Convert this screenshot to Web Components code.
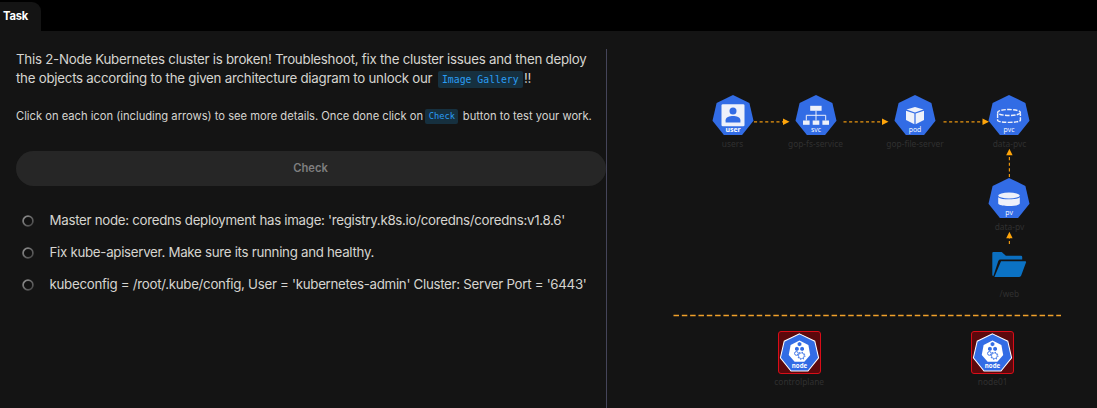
<!DOCTYPE html>
<html lang="en">
<head>
<meta charset="utf-8">
<title>Task</title>
<style>
html,body{margin:0;height:100%;background:#141414;overflow:hidden}
body{font-family:Inter,"Liberation Sans",sans-serif;color:#d6d4d0}
</style>
</head>
<body>
<lab-page></lab-page>
<script>
function define(name, html, setup) {
  const t = document.createElement('template');
  t.innerHTML = html;
  customElements.define(name, class extends HTMLElement {
    constructor() {
      super();
      this.attachShadow({mode: 'open'}).append(t.content.cloneNode(true));
    }
    connectedCallback() { if (setup) setup(this, this.shadowRoot); }
  });
}

define('tab-bar', `
<style>
:host{display:flex;align-items:flex-end;height:31px;background:#000}
.tab{box-sizing:border-box;width:41px;height:29px;padding:5px 0 0 3px;background:#141414;border-radius:0 9px 0 0;color:#fff;font-size:11.2px;font-weight:700;letter-spacing:-.2px;line-height:18px;white-space:nowrap}
</style>
<div class="tab"><slot></slot></div>`);

define('code-chip', `
<style>
:host{display:inline-block;box-sizing:border-box;height:17px;padding:0 4.4px;border-radius:2px;background:#16303f;color:#2a9df4;font:9.8px/17px "DejaVu Sans Mono",monospace;letter-spacing:0;vertical-align:0;white-space:nowrap;margin:0 1px 0 1.7px}
:host([small]){height:15px;line-height:15px;font-size:8.7px;padding:0 3.4px;margin:0 1.3px 0 -.7px;vertical-align:1px}
span{display:inline-block}
</style><span><slot></slot></span>`);

define('check-button', `
<style>
:host{display:block}
button{display:block;width:100%;height:35px;border:0;padding:0 1px 0 0;border-radius:18px;background:#262626;color:#7f7f7f;font:600 11.2px/35px Inter,sans-serif;letter-spacing:0}
</style><button type="button"><slot></slot></button>`);

define('task-item', `
<style>
:host{display:flex;align-items:center;height:32px;padding-left:6px;font-size:13.3px;letter-spacing:-.29px;white-space:nowrap}
svg{flex:none;width:12px;height:12px;margin:2px 15.5px 0 0}
</style>
<svg viewBox="0 0 12 12"><defs><linearGradient id="g" x1="0" y1="0" x2="1" y2="1"><stop offset="0" stop-color="#929292"/><stop offset="1" stop-color="#444"/></linearGradient></defs><circle cx="6" cy="6" r="4.9" fill="#111" stroke="url(#g)" stroke-width="1.7"/></svg>
<span><slot></slot></span>`);

const HEPT = '0,-21 16.4,-13.1 20.5,4.7 9.1,18.9 -9.1,18.9 -20.5,4.7 -16.4,-13.1';
const ART = {
  user: `<rect x="-11.5" y="-11.7" width="23" height="22" rx="1.3" fill="#eef1fa"/><circle cy="-5" r="3.5" fill="#326ce5"/><path d="M-7.4 6.4V4.2C-7.4 1.2-3.5 0 0 0s7.4 1.2 7.4 4.2v2.2z" fill="#326ce5"/>`,
  svc: `<g fill="#eef1fa"><rect x="-5.8" y="-10.2" width="11.4" height="5"/><rect x="-13" y="4.5" width="6.6" height="4.3"/><rect x="-3.3" y="4.5" width="6.6" height="4.3"/><rect x="6.4" y="4.5" width="6.6" height="4.3"/></g><path d="M0-5.2V4.5M-9.7 4.5V-.7H9.7V4.5" fill="none" stroke="#eef1fa" stroke-width="1"/>`,
  pod: `<g fill="#eef1fa"><path d="M0-9.1 8.5-6.4 0-3.6-8.5-6.4z"/><path d="M-9-5.3-.6-2.6V8.2L-9 4.1z"/><path d="M9-5.3.6-2.6V8.2L9 4.1z"/></g>`,
  pvc: `<g fill="none" stroke="#eef1fa" stroke-width="1.4" stroke-dasharray="4.5 1.3"><ellipse cy="-3.5" rx="11.4" ry="3"/><path d="M-11.4-2.5V4.2C-11.4 7.1 11.4 7.1 11.4 4.2V-2.5"/></g>`,
  pv: `<g fill="#eef1fa"><ellipse cy="-3.5" rx="10.8" ry="3"/><path d="M-10.8-1.8C-9-.1-5 .2 0 .2S9-.1 10.8-1.8V4.3C10.8 8 -10.8 8-10.8 4.3z"/></g>`,
  node: `<polygon points="0,-12.8 9.5,-8 11.5,2.7 5.2,10 -5.2,10 -11.5,2.7 -9.5,-8" fill="#fff"/><g fill="#326ce5"><path d="M0-11.3 2-10.2v2.4L0-6.7-2-7.8v-2.4z"/><path d="M-2.8-6.3-.8-5.2v2.4l-2 1.1-2-1.1v-2.4z"/><path d="M2.8-6.3 4.8-5.2v2.4l-2 1.1-2-1.1v-2.4z"/></g><g fill="none" stroke="#326ce5"><circle cx="-3.3" cy="1" r="2" stroke-width="1"/><circle cx="2" cy="3.5" r="3.1" stroke-width=".8"/><circle cx="2" cy="3.5" r="3.8" stroke-width="1.1" stroke-dasharray="1.1 1.9"/></g>`
};

define('kube-node', `
<style>
:host{position:absolute;display:flex;flex-direction:column;align-items:center;width:100px;margin-left:-50px}
svg{width:44px;height:44px;overflow:visible;border-radius:3px;box-sizing:border-box}
:host([alert]) svg{background:#5c080c;border:1.4px solid #d90d18;width:43px;height:43px}
text{font-family:"Open Sans",sans-serif;fill:#fff;text-anchor:middle}
.label{font-family:"Noto Sans",sans-serif;font-size:8.4px;line-height:12px;margin-top:-.5px;color:#303030;white-space:nowrap}
:host([alert]) .label{margin-top:1.5px}
</style>
<svg viewBox="-22 -22 44 44"></svg>
<div class="label"><slot></slot></div>`, (el, root) => {
  const kind = el.getAttribute('kind'), svg = root.querySelector('svg');
  el.style.left = el.getAttribute('x') + 'px';
  el.style.top = el.getAttribute('y') + 'px';
  if (kind === 'folder') {
    svg.innerHTML = `<g transform="translate(0 2.6)"><path d="M-16.7-15.5q0-1 1-1h8.4l4.2 3.7H12q1.2 0 1.2 1.2v2.6H-8.5q-1.6 0-2.2 1.4L-15.6 7.5q-1.1-.1-1.1-1.3z" fill="#0b6fc0"/><path d="M-8-7.4H16.2q1.4 0 .8 1.4L12.2 7q-.5 1.3-2 1.3H-14.6z" fill="#0b72c4"/></g>`;
    return;
  }
  const bold = kind === 'node' || kind === 'user';
  const edge = kind === 'node' ? ' stroke="#fff" stroke-width="1.1" transform="translate(0 1)"' : '';
  svg.innerHTML = `<polygon points="${HEPT}" fill="#326ce5"${edge}/>${ART[kind]}<text y="${kind === 'node' ? 16.5 : 16.3}" font-size="${kind === 'node' ? 6.6 : 6.9}" font-weight="${bold ? 700 : 400}">${kind}</text>`;
});

define('architecture-diagram', `
<style>
:host{position:relative;display:block;flex:1;min-width:0}
.wires{position:absolute;left:0;top:0;width:490px;height:377px}
</style>
<svg class="wires" viewBox="607 31 490 377">
<g fill="none" stroke="#e9950f" stroke-width="1.2" stroke-dasharray="3.1 2.5"><path d="M754 121.8H784"/><path d="M843.5 121.8H883"/><path d="M943.5 121.8H983"/><path d="M1009.4 177V154"/><path d="M1009.4 244V238"/></g>
<g fill="#ffa50a"><path d="M783 118.5 789.5 121.8 783 125z"/><path d="M882 118.5 888.5 121.8 882 125z"/><path d="M982.5 118.5 989 121.8 982.5 125z"/><path d="M1006.2 155.3 1009.4 148.8 1012.6 155.3z"/><path d="M1006.2 238.2 1009.4 231.8 1012.6 238.2z"/></g>
<path d="M673.5 315.5H1061" fill="none" stroke="#f0a02a" stroke-width="1.3" stroke-dasharray="5.5 2.82"/>
</svg>
<kube-node kind="user" x="125.5" y="63">users</kube-node>
<kube-node kind="svc" x="208.5" y="63">gop-fs-service</kube-node>
<kube-node kind="pod" x="308" y="63">gop-file-server</kube-node>
<kube-node kind="pvc" x="402.4" y="63">data-pvc</kube-node>
<kube-node kind="pv" x="402.4" y="146">data-pv</kube-node>
<kube-node kind="folder" x="402.4" y="213">/web</kube-node>
<kube-node kind="node" alert x="192.2" y="300.4">controlplane</kube-node>
<kube-node kind="node" alert x="385.7" y="300.4">node01</kube-node>`);

define('task-panel', `
<style>
:host{display:block;box-sizing:border-box;width:607px;padding:19px 0 0 16px;border-right:1px solid #45455a;border-image:linear-gradient(to bottom,transparent 19px,#45455a 19px) 1}
p{margin:0;white-space:nowrap}
.intro{font-size:13.3px;letter-spacing:-.25px;line-height:19.4px;height:39px}
.hint{font-size:11.2px;letter-spacing:-.01px;line-height:18px;margin-top:18px}
check-button{margin-top:26px}
.list{margin-top:18px}
</style>
<p class="intro">This 2-Node Kubernetes cluster is broken! Troubleshoot, fix the cluster issues and then deploy<br>the objects according to the given architecture diagram to unlock our <code-chip>Image Gallery</code-chip>!!</p>
<p class="hint">Click on each icon (including arrows) to see more details. Once done click on <code-chip small>Check</code-chip> button to test your work.</p>
<check-button>Check</check-button>
<div class="list">
<task-item>Master node: coredns deployment has image: 'registry.k8s.io/coredns/coredns:v1.8.6'</task-item>
<task-item>Fix kube-apiserver. Make sure its running and healthy.</task-item>
<task-item>kubeconfig = /root/.kube/config, User = 'kubernetes-admin' Cluster: Server Port = '6443'</task-item>
</div>`);

define('lab-page', `
<style>
:host{display:flex;flex-direction:column;height:408px}
main{display:flex;flex:1;min-height:0}
</style>
<tab-bar>Task</tab-bar>
<main><task-panel></task-panel><architecture-diagram></architecture-diagram></main>`);
</script>
</body>
</html>
